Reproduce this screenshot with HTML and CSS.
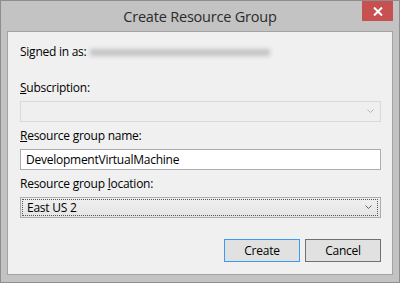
FILE: index.html
```html
<!DOCTYPE html>
<html lang="en">
<head>
    <meta charset="UTF-8">
    <title>Create Resource Group</title>
    <link rel="stylesheet" href="styles.css">
</head>
<body>
    <div class="window">
        <div class="titlebar">
            <span class="title">Create Resource Group</span>
            <div class="close">
                <svg width="10" height="9" viewBox="0 0 10 9"><path d="M1 0.5 L9 8.5 M9 0.5 L1 8.5" stroke="#fff" stroke-width="2"/></svg>
            </div>
        </div>
        <div class="panel">
            <div class="signed">Signed in as: <span class="email"></span></div>

            <label class="field-label first"><u>S</u>ubscription:</label>
            <div class="combo disabled">
                <span class="combo-text"></span>
                <svg class="chevron" width="7" height="5" viewBox="0 0 7 5"><path d="M0.5 0.5 L3.5 3.5 L6.5 0.5" fill="none" stroke="#b4b4b4" stroke-width="1"/></svg>
            </div>

            <label class="field-label"><u>R</u>esource group name:</label>
            <div class="textbox">DevelopmentVirtualMachine</div>

            <label class="field-label">Resource group <u>l</u>ocation:</label>
            <div class="combo">
                <div class="focus">
                    <span class="combo-text">East US 2</span>
                    <svg class="chevron" width="7" height="5" viewBox="0 0 7 5"><path d="M0.5 0.5 L3.5 3.5 L6.5 0.5" fill="none" stroke="#606060" stroke-width="1"/></svg>
                </div>
            </div>

            <div class="buttons">
                <button class="btn default">Create</button>
                <button class="btn">Cancel</button>
            </div>
        </div>
    </div>
</body>
</html>
```

FILE: styles.css
```css
body {
    margin: 0;
    font-family: "Open Sans", "Noto Sans", sans-serif;
    font-size: 12px;
    letter-spacing: -0.25px;
    color: #000;
}
.window {
    width: 400px;
    height: 283px;
    box-sizing: border-box;
    border: 1px solid #8e8e8e;
    background-color: #c3c3c3;
    position: relative;
    display: flex;
    flex-direction: column;
}
.titlebar {
    height: 30px;
    display: flex;
    align-items: center;
    justify-content: center;
}
.title {
    font-size: 14.5px;
    letter-spacing: -0.2px;
    color: #2b2b2b;
    margin-top: 1px;
}
.close {
    position: absolute;
    top: 0;
    right: 6px;
    width: 31px;
    height: 20px;
    background-color: #c75050;
    display: flex;
    align-items: center;
    justify-content: center;
}
.panel {
    flex: 1;
    margin: 0 6px 7px 6px;
    border: 1px solid #a3a3a3;
    background-color: #f0f0f0;
    padding: 12px 11px 0 12px;
    display: flex;
    flex-direction: column;
}
.signed {
    line-height: 16px;
    height: 16px;
    display: flex;
    align-items: center;
    gap: 4px;
}
.email {
    display: inline-block;
    width: 180px;
    height: 7px;
    background-color: #c4c4c4;
    filter: blur(2px);
}
.field-label {
    display: block;
    line-height: 16px;
    margin-top: 6px;
    margin-bottom: 5px;
}
.field-label.first {
    margin-top: 20px;
}
.field-label u {
    text-decoration-thickness: 1px;
}
.combo, .textbox {
    height: 21px;
    box-sizing: border-box;
}
.combo {
    border: 1px solid #acacac;
    background: linear-gradient(#f0f0f0, #e5e5e5);
    display: flex;
    align-items: center;
    justify-content: space-between;
    padding: 0 6px 0 5px;
}
.combo.disabled {
    border-color: #d9d9d9;
    background: #efefef;
}
.combo .focus {
    flex: 1;
    margin: 0 -4px 0 -4px;
    height: 15px;
    border: 1px dotted #555;
    display: flex;
    align-items: center;
    justify-content: space-between;
    padding: 0 5px 0 4px;
}
.chevron {
    display: block;
}
.textbox {
    border: 1px solid #abadb3;
    background-color: #fff;
    padding: 0 5px;
    line-height: 19px;
}
.buttons {
    display: flex;
    justify-content: flex-end;
    gap: 5px;
    margin-top: 21px;
}
.btn {
    width: 76px;
    height: 23px;
    font-family: inherit;
    font-size: 12px;
    letter-spacing: inherit;
    background-color: #e1e1e1;
    border: 1px solid #707070;
    padding: 0;
    margin: 0;
}
.btn.default {
    border-color: #3c9bf0;
}
```
